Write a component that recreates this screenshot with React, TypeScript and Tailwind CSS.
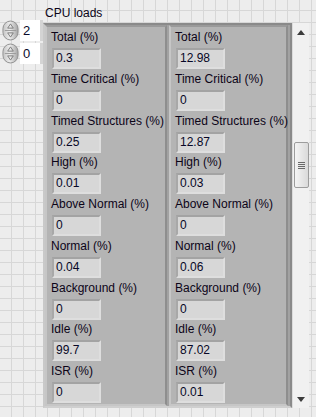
import React from 'react';

const rows = [
  'Total (%)',
  'Time Critical (%)',
  'Timed Structures (%)',
  'High (%)',
  'Above Normal (%)',
  'Normal (%)',
  'Background (%)',
  'Idle (%)',
  'ISR (%)',
];

const columns = [
  ['0.3', '0', '0.25', '0.01', '0', '0.04', '0', '99.7', '0'],
  ['12.98', '0', '12.87', '0.03', '0', '0.06', '0', '87.02', '0.01'],
];

const Spinner = ({ value }: { value: string }) => (
  <div className="flex h-[21px] items-center">
    <svg width="18" height="21" viewBox="0 0 18 21">
      <defs>
        <linearGradient id="spin" x1="0" y1="0" x2="1" y2="0">
          <stop offset="0" stopColor="#c4c4c4" />
          <stop offset="0.45" stopColor="#ececec" />
          <stop offset="1" stopColor="#a4a4a4" />
        </linearGradient>
      </defs>
      <rect x="1" y="0.5" width="16" height="20" rx="8" fill="url(#spin)" stroke="#8e8e8e" />
      <line x1="3" y1="10.5" x2="15" y2="10.5" stroke="#9a9a9a" />
      <path d="M9 3.5 L12 8 L6 8 Z" fill="none" stroke="#7a7a7a" />
      <path d="M9 17.5 L12 13 L6 13 Z" fill="none" stroke="#7a7a7a" />
    </svg>
    <div className="ml-[1px] h-[21px] w-[24px] border-r-[3px] border-[#d4d4d4] bg-white pl-[3px] text-[13px] leading-[21px] text-[#0a0a2a]">
      {value}
    </div>
  </div>
);

const Cluster = ({ values, last }: { values: string[]; last?: boolean }) => (
  <div
    className={`flex flex-col border-2 border-t-[#9a9a9a] border-l-[#c6c6c6] border-b-[#c6c6c6] border-r-[#8e8e8e] bg-[#b4b4b4] pl-[4px] pt-[1px] ${
      last ? 'w-[119px]' : 'w-[122px]'
    }`}
  >
    {rows.map((label, i) => (
      <div key={label} className="flex h-[42px] flex-col">
        <div className="h-[18px] whitespace-nowrap text-[12px] leading-[18px] text-[#0c0418]">{label}</div>
        <div className="ml-[1px] mt-[2px] h-[21px] w-[49px] border-2 border-t-[#a3a3a3] border-l-[#a8a8a8] border-b-[#dedede] border-r-[#dedede] bg-[#d7d7d7] pl-[2px] text-[12px] leading-[17px] text-[#070726]">
          {values[i]}
        </div>
      </div>
    ))}
  </div>
);

const App = () => {
  return (
    <div
      className="flex h-[417px] w-[316px] overflow-hidden bg-[#ededed] bg-[linear-gradient(#d7d7d7_1px,transparent_1px),linear-gradient(90deg,#d7d7d7_1px,transparent_1px)] bg-size-[12px_12px] bg-position-[-1px_-2px]"
      style={{ fontFamily: '"Liberation Sans", Arial, sans-serif' }}
    >
      <div className="flex w-[43px] flex-col gap-[2px] pl-[2px] pt-[20px]">
        <Spinner value="2" />
        <Spinner value="0" />
      </div>
      <div className="flex flex-col">
        <div className="h-[23px] pl-[2px] pt-[6px] text-[12px] leading-[14px] text-[#0c0418]">CPU loads</div>
        <div className="flex">
          <div className="flex h-[385px] w-[249px] gap-[2px] border-2 border-t-[#8a8a8a] border-l-[#c9c9c9] border-b-[#cfcfcf] border-r-[#8a8a8a] bg-[#a2a2a2]">
            <Cluster values={columns[0]} />
            <Cluster values={columns[1]} last />
          </div>
          <div className="flex h-[385px] w-[17px] flex-col items-center border-l border-[#dcdcdc] bg-[#f1f1f1]">
            <svg width="8" height="5" viewBox="0 0 8 5" className="mt-[7px]">
              <path d="M4 0 L8 5 L0 5 Z" fill="#3c3c3c" />
            </svg>
            <div className="mt-[107px] flex h-[46px] w-[15px] flex-col items-center justify-center gap-[1px] rounded-[2px] border border-[#9c9c9c] bg-[linear-gradient(90deg,#f4f4f4,#dadada)]">
              <div className="h-px w-[7px] bg-[#6a6a6a]" />
              <div className="h-px w-[7px] bg-[#6a6a6a]" />
              <div className="h-px w-[7px] bg-[#6a6a6a]" />
              <div className="h-px w-[7px] bg-[#6a6a6a]" />
            </div>
            <div className="flex-1" />
            <svg width="8" height="5" viewBox="0 0 8 5" className="mb-[6px]">
              <path d="M0 0 L8 0 L4 5 Z" fill="#3c3c3c" />
            </svg>
          </div>
        </div>
      </div>
    </div>
  );
};

export default App;
